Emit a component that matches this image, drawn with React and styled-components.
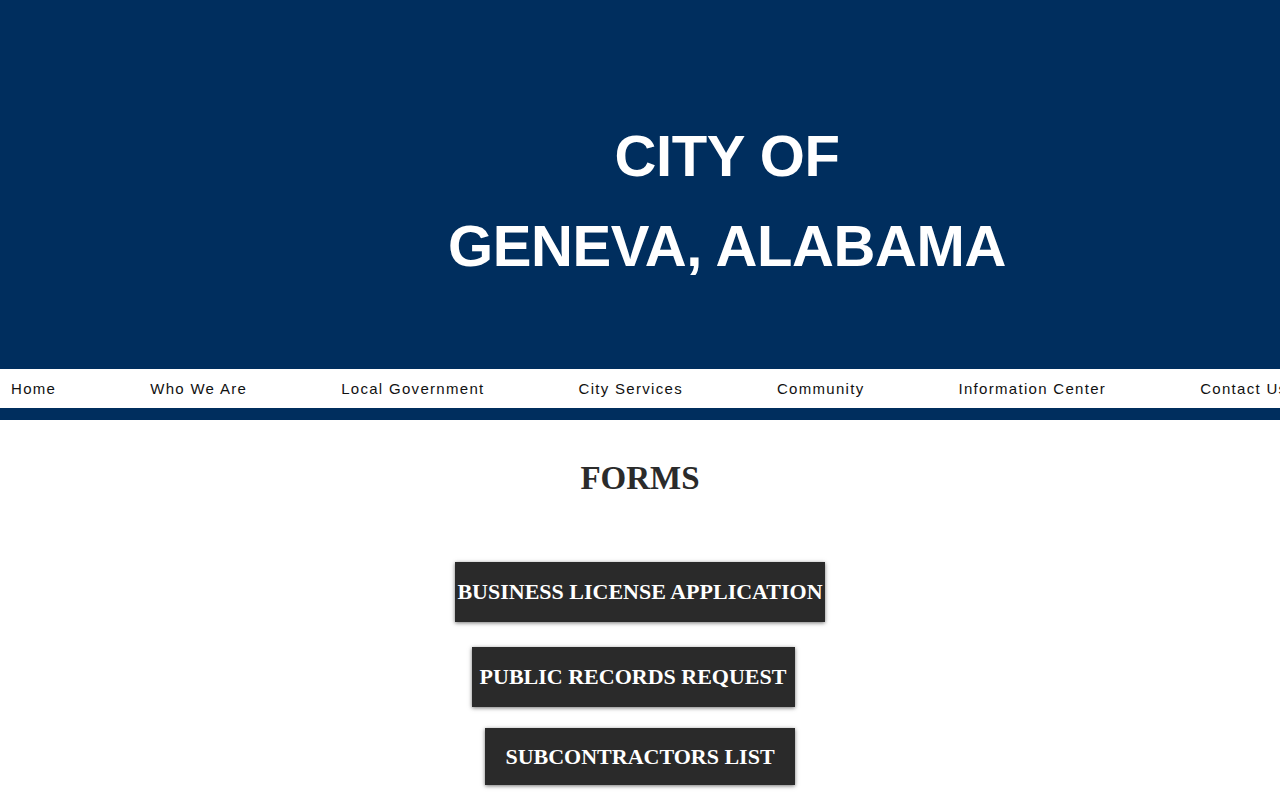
import React from 'react';
import { styled, createGlobalStyle } from 'styled-components';

const GlobalStyle = createGlobalStyle`
  html, body {
    margin: 0;
    padding: 0;
    background: #ffffff;
  }
  body {
    font-family: "Liberation Sans", Arial, sans-serif;
  }
`;

const Page = styled.div`
  width: 1280px;
  overflow: hidden;
  padding-bottom: 20px;
`;

const Header = styled.header`
  height: 369px;
  box-sizing: border-box;
  padding: 111px 0 0 174px;
  background: #002e5e;
`;

const Title = styled.h1`
  margin: 0;
  font-family: "Liberation Sans", Arial, sans-serif;
  font-weight: 700;
  font-size: 58px;
  line-height: 90px;
  color: #ffffff;
  text-align: center;
  letter-spacing: -0.4px;
`;

const Nav = styled.nav`
  display: flex;
  gap: 94px;
  height: 39px;
  padding-left: 11px;
  background: #ffffff;
  white-space: nowrap;
  overflow: hidden;
`;

const NavItem = styled.a`
  font-family: "Liberation Sans", Arial, sans-serif;
  font-size: 15px;
  line-height: 39px;
  letter-spacing: 1.3px;
  color: #111111;
  text-decoration: none;
`;

const Strip = styled.div`
  height: 12px;
  background: #002e5e;
`;

const Content = styled.main`
  display: flex;
  flex-direction: column;
  align-items: center;
  padding-top: 38px;
`;

const Heading = styled.h2`
  margin: 0 0 64px;
  font-family: "Liberation Serif", "Times New Roman", serif;
  font-weight: 700;
  font-size: 33px;
  line-height: 40px;
  color: #2b2b2b;
`;

const Buttons = styled.div`
  display: flex;
  flex-direction: column;
  align-items: center;
`;

const FormButton = styled.a`
  display: flex;
  align-items: center;
  justify-content: center;
  width: ${p => p.$w}px;
  height: ${p => p.$h || 60}px;
  margin-bottom: ${p => p.$gap || 0}px;
  transform: translateX(${p => p.$shift || 0}px);
  background: #2a2a2a;
  box-shadow: 0 1px 4px rgba(0, 0, 0, 0.55);
  font-family: "Liberation Serif", "Times New Roman", serif;
  font-weight: 700;
  font-size: 22px;
  color: #ffffff;
  white-space: nowrap;
  text-decoration: none;
  cursor: pointer;
`;

const links = [
  'Home',
  'Who We Are',
  'Local Government',
  'City Services',
  'Community',
  'Information Center',
  'Contact Us',
];

const App = () => {
  return (
    <Page>
      <GlobalStyle />
      <Header>
        <Title>
          CITY OF
          <br />
          GENEVA, ALABAMA
        </Title>
      </Header>
      <Nav>
        {links.map(l => (
          <NavItem key={l}>{l}</NavItem>
        ))}
      </Nav>
      <Strip />
      <Content>
        <Heading>FORMS</Heading>
        <Buttons>
          <FormButton $w={370} $gap={25}>BUSINESS LICENSE APPLICATION</FormButton>
          <FormButton $w={323} $gap={21} $shift={-7}>PUBLIC RECORDS REQUEST</FormButton>
          <FormButton $w={310} $h={57}>SUBCONTRACTORS LIST</FormButton>
        </Buttons>
      </Content>
    </Page>
  );
};

export default App;
